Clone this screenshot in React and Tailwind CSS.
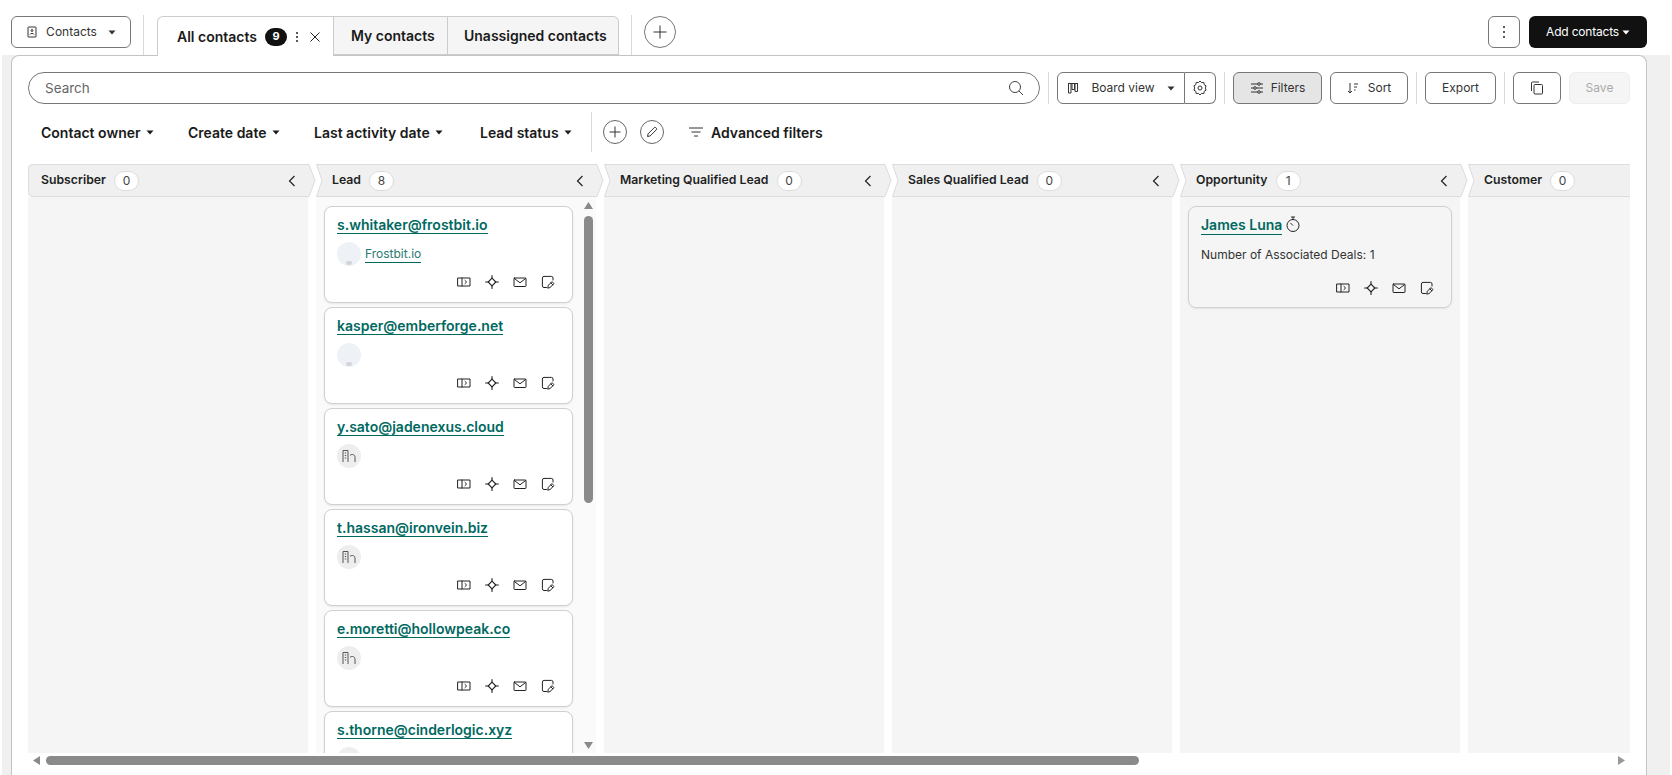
import React from "react";

const Caret = ({ className = "" }) => (
  <svg width="8" height="5" viewBox="0 0 8 5" className={className}><path d="M0.5 0.5h7L4 4.5z" fill="currentColor" /></svg>
);

const Sep = ({ className = "" }) => <div className={"w-px bg-[#d9d9d9] shrink-0 " + className} />;

const base = { fill: "none", stroke: "currentColor", strokeWidth: 1, strokeLinecap: "round", strokeLinejoin: "round" };

const IPreview = () => (
  <svg width="14" height="12" viewBox="0 0 14 12" {...base}><rect x="1" y="2" width="12" height="8" /><path d="M5 2v8M8 4.5 9.6 6 8 7.5" /></svg>
);
const ISpark = () => (
  <svg width="14" height="14" viewBox="0 0 14 14" {...base} strokeWidth="1.1"><path d="M7 3.2 10.8 7 7 10.8 3.2 7z" /><path d="M7 .6v2.6M7 10.8v2.6M.6 7h2.6M10.8 7h2.6" /></svg>
);
const IMail = () => (
  <svg width="14" height="12" viewBox="0 0 14 12" {...base}><rect x="1" y="2" width="12" height="8.5" rx=".6" /><path d="M1.5 2.6 7 6.8l5.5-4.2" /></svg>
);
const INote = () => (
  <svg width="14" height="14" viewBox="0 0 14 14" {...base}><path d="M5.5 12.500H3a1.600 1.600 0 0 1-1.600-1.600V3A1.600 1.600 0 0 1 3 1.400h7.500A1.600 1.600 0 0 1 12 3v2" /><path d="M6.800 12.800l.5-2.500 3.700-3.700 2 2-3.700 3.700zM9.800 7.800l2 2" /></svg>
);
const Building = () => (
  <svg width="14" height="14" viewBox="0 0 14 14" fill="none" stroke="#555" strokeWidth="1"><path d="M1 13V1.500h5V13M2.800 4h1.400M2.800 6.500h1.400M2.800 9h1.400M8 6.200c2.500-1.500 5-.5 5 2V13" /></svg>
);

const Actions = ({ className = "" }) => (
  <div className={"flex justify-end items-center gap-[14px] text-[#222] " + className}>
    <span className="w-[14px] flex justify-center"><IPreview /></span>
    <span className="w-[14px] flex justify-center"><ISpark /></span>
    <span className="w-[14px] flex justify-center"><IMail /></span>
    <span className="w-[14px] flex justify-center"><INote /></span>
  </div>
);

const Email = ({ children }) => (
  <a className="inline-block text-[14px] font-semibold leading-[19px] text-[#00695f] border-b-[1.5px] border-[#00695f]">{children}</a>
);

const Card = ({ email, frost, company, building }) => (
  <div className="shrink-0 w-[249px] h-[97px] bg-white border border-[#d0d0d0] rounded-lg shadow-[0_1px_2px_rgba(0,0,0,0.08)] pl-3 pr-[17px] pt-[8px]">
    <div className="h-[19px] flex"><Email>{email}</Email></div>
    <div className="flex items-center h-[24px] mt-[8px] gap-1">
      {frost && (
        <span className="relative w-6 h-6 rounded-full bg-[#eef2f7] blur-[0.5px] overflow-hidden shrink-0">
          <span className="absolute left-[9px] bottom-[1px] w-[6px] h-[4px] rounded-full bg-[#d2d5d9]" />
        </span>
      )}
      {building && (
        <span className="w-6 h-6 rounded-full bg-[#eeeeee] flex items-center justify-center shrink-0"><Building /></span>
      )}
      {company && <span className="text-[12px] leading-[16px] text-[#2a7a70] border-b border-[#00695f]">{company}</span>}
    </div>
    <Actions className="mt-[9px]" />
  </div>
);

const leads = [
  { email: "s.whitaker@frostbit.io", frost: true, company: "Frostbit.io" },
  { email: "kasper@emberforge.net", frost: true },
  { email: "y.sato@jadenexus.cloud", building: true },
  { email: "t.hassan@ironvein.biz", building: true },
  { email: "e.moretti@hollowpeak.co", building: true },
  { email: "s.thorne@cinderlogic.xyz", building: true },
];

const Header = ({ name, count, first, last }) => (
  <div className="relative h-[33px] flex items-center">
    <svg width="288" height="33" viewBox="0 0 288 33" className="absolute left-0 top-0">
      {first ? (
        <path d="M.5 4.500a4 4 0 0 1 4-4H281l6 16-6 16H4.500a4 4 0 0 1-4-4z" fill="#f0f0f0" stroke="#dcdcdc" />
      ) : (
        <path d="M.5 .5H281l6 16-6 16H.5l5.500-16z" fill="#f0f0f0" stroke="#dcdcdc" />
      )}
    </svg>
    <div className={"relative flex items-center " + (first ? "pl-[13px]" : "pl-4")}>
      <span className="text-[12.25px] font-semibold text-[#1f1f1f]">{name}</span>
      <span className="ml-2 w-[25px] h-[20px] rounded-full bg-white border border-[#dcdcdc] flex items-center justify-center text-[12px] text-[#444]">{count}</span>
    </div>
    {!last && (
      <svg width="8" height="12" viewBox="0 0 8 12" fill="none" stroke="#222" strokeWidth="1.2" className="absolute left-[260px] top-[11px]"><path d="M6.500 1 1.500 6l5 5" /></svg>
    )}
  </div>
);

const Column = ({ name, count, first, last, className = "", children, wide = true }) => (
  <div className={"shrink-0 flex flex-col " + (wide ? "w-[280px]" : "w-[162px]") + " " + className}>
    <Header name={name} count={count} first={first} last={last} />
    {children}
  </div>
);

const Btn = ({ className = "", children }) => (
  <button className={"h-8 rounded-md border border-[#777] flex items-center justify-center text-[12px] text-[#333] shrink-0 " + className}>{children}</button>
);

const Filter = ({ label, className }) => (
  <div className={"flex items-center gap-[5px] text-[14px] font-semibold text-[#1a1a1a] " + className}>
    {label}
    <Caret />
  </div>
);

export default function App() {
  return (
    <div className="w-[1672px] h-[775px] bg-white overflow-hidden flex flex-col [font-family:Inter,sans-serif]">
      <div className="h-[55px] relative z-10 flex items-start pl-[11px] pr-[25px] shrink-0">
        <Btn className="w-[120px] mt-4 gap-[8px]">
          <svg width="12" height="12" viewBox="0 0 12 12" fill="none" stroke="#333"><rect x="2" y="1" width="8" height="10" rx=".5" /><circle cx="6" cy="4.500" r="1" /><path d="M4 8.500c.5-1.500 3.500-1.500 4 0" /></svg>
          <span>Contacts</span>
          <Caret className="ml-[3px]" />
        </Btn>
        <Sep className="h-10 mt-[15px] ml-3" />
        <div className="flex mt-4 ml-[13px] h-10">
          <div className="w-[177px] h-10 bg-white border border-[#ccc] border-b-0 rounded-tl-md flex items-center pl-[19px] text-[14px] font-semibold text-[#1a1a1a]">
            <span>All contacts</span>
            <span className="ml-2 w-[22px] h-[18px] rounded-full bg-[#111] text-white text-[11px] font-bold flex items-center justify-center">9</span>
            <svg width="4" height="12" viewBox="0 0 4 12" className="ml-2" fill="#222"><circle cx="2" cy="2" r="1" /><circle cx="2" cy="6" r="1" /><circle cx="2" cy="10" r="1" /></svg>
            <svg width="12" height="12" viewBox="0 0 12 12" className="ml-[10px]" fill="none" stroke="#222"><path d="M1.500 1.500l9 9M10.500 1.500l-9 9" /></svg>
          </div>
          <div className="w-[114px] h-[39px] bg-[#f5f5f5] border border-l-0 border-[#ccc] flex items-center pl-[17px] text-[14px] font-semibold text-[#1a1a1a]">My contacts</div>
          <div className="w-[171px] h-[39px] bg-[#f5f5f5] border border-l-0 border-[#ccc] rounded-tr-md flex items-center pl-[16px] text-[14px] font-semibold text-[#1a1a1a]">Unassigned contacts</div>
        </div>
        <Sep className="h-10 mt-[15px] ml-3" />
        <button className="w-8 h-8 mt-4 ml-3 rounded-full border border-[#777] flex items-center justify-center">
          <svg width="14" height="14" viewBox="0 0 14 14" stroke="#333"><path d="M7 .5v13M.5 7h13" /></svg>
        </button>
        <div className="ml-auto flex gap-[9px] pt-4">
          <Btn className="w-[32px]">
            <svg width="4" height="14" viewBox="0 0 4 14" fill="#222"><circle cx="2" cy="2" r="1" /><circle cx="2" cy="7" r="1" /><circle cx="2" cy="12" r="1" /></svg>
          </Btn>
          <button className="w-[118px] h-8 rounded-md bg-[#111] text-white text-[12px] tracking-[-0.2px] flex items-center justify-center gap-[3px]">Add contacts <Caret /></button>
        </div>
      </div>

      <div className="flex-1 min-h-0 mx-[2px] bg-[#f0f0f0] pl-[9px] pr-[23px] flex">
        <div className="flex-1 min-w-0 bg-white border border-b-0 border-[#c4c4c4] rounded-t-lg pl-4 pr-[16px] pt-4 flex flex-col">
          <div className="flex items-center gap-2 h-8 shrink-0">
            <div className="w-[1012px] h-8 rounded-full border border-[#777] flex items-center justify-between pl-4 pr-[15px] shrink-0">
              <span className="text-[13.500px] text-[#666]">Search</span>
              <svg width="16" height="16" viewBox="0 0 16 16" fill="none" stroke="#444"><circle cx="7" cy="7" r="5.500" /><path d="M11 11l4 4" /></svg>
            </div>
            <Sep className="h-8" />
            <div className="flex h-8 shrink-0">
              <button className="w-[128px] h-8 border border-[#777] rounded-l-md flex items-center justify-center gap-[12px] text-[12px] text-[#333]">
                <svg width="12" height="12" viewBox="0 0 12 12" fill="none" stroke="#333"><path d="M1 1.500h10M1.500 1.500v9.500h2.500v-9.500M5 1.500v6h2.500v-6M8 1.500v8h2.500v-8" /></svg>
                <span>Board view</span>
                <Caret />
              </button>
              <button className="w-[31px] h-8 border border-l-0 border-[#777] rounded-r-md flex items-center justify-center">
                <svg width="16" height="16" viewBox="0 0 16 16" fill="none" stroke="#333"><path d="M8 1l1.500 1.600 2.300-.2.400 2.300 2 1.200-1 2.100 1 2.100-2 1.200-.4 2.300-2.300-.2L8 15l-1.500-1.600-2.300.2-.4-2.300-2-1.200 1-2.100-1-2.100 2-1.200.4-2.300 2.300.2z" /><circle cx="8" cy="8" r="2" /></svg>
              </button>
            </div>
            <Sep className="h-8" />
            <Btn className="w-[89px] bg-[#e5e5e5] gap-[7px]">
              <svg width="14" height="14" viewBox="0 0 14 14" fill="none" stroke="#333"><path d="M1 3h12M1 7h12M1 11h12" /><circle cx="9" cy="3" r="1.300" fill="#e5e5e5" /><circle cx="5" cy="7" r="1.300" fill="#e5e5e5" /><circle cx="9" cy="11" r="1.300" fill="#e5e5e5" /></svg>
              <span>Filters</span>
            </Btn>
            <Btn className="w-[78px] gap-[9px]">
              <svg width="12" height="12" viewBox="0 0 12 12" fill="none" stroke="#333"><path d="M3 1v10M1 9l2 2 2-2M7 2h4M7 5h3M7 8h1.500" /></svg>
              <span>Sort</span>
            </Btn>
            <Sep className="h-8" />
            <Btn className="w-[71px]">Export</Btn>
            <Sep className="h-8" />
            <Btn className="w-[48px]">
              <svg width="14" height="14" viewBox="0 0 14 14" fill="none" stroke="#333"><path d="M1.500 10V2a1 1 0 0 1 1-1H9" /><rect x="4" y="3.500" width="8.500" height="9.500" rx="1" /></svg>
            </Btn>
            <button className="w-[61px] h-8 rounded-md bg-[#f5f5f5] border border-[#eee] text-[12px] text-[#aaa] shrink-0">Save</button>
          </div>

          <div className="flex items-center h-10 mt-2 pl-[13px] shrink-0">
            <Filter label="Contact owner" className="w-[147px]" />
            <Filter label="Create date" className="w-[126px]" />
            <Filter label="Last activity date" className="w-[166px]" />
            <Filter label="Lead status" className="w-[111px]" />
            <Sep className="h-10" />
            <button className="ml-[11px] w-6 h-6 rounded-full border border-[#666] flex items-center justify-center">
              <svg width="12" height="12" viewBox="0 0 12 12" stroke="#333"><path d="M6 .5v11M.5 6h11" /></svg>
            </button>
            <button className="ml-[13px] w-6 h-6 rounded-full border border-[#666] flex items-center justify-center">
              <svg width="12" height="12" viewBox="0 0 12 12" fill="none" stroke="#333"><path d="M1.500 10.500l.6-2.700L8.300 1.600a1 1 0 0 1 1.400 0l.7.7a1 1 0 0 1 0 1.400L4.200 9.900z" /></svg>
            </button>
            <svg width="14" height="10" viewBox="0 0 14 10" stroke="#333" className="ml-[25px]"><path d="M0 1h14M2.500 5h9M5 9h4" /></svg>
            <span className="ml-2 text-[14px] font-semibold text-[#1a1a1a]">Advanced filters</span>
          </div>

          <div className="mt-3 flex-1 min-h-0 flex gap-2 overflow-hidden">
            <Column name="Subscriber" count="0" first><div className="flex-1 bg-[#f5f5f5]" /></Column>
            <Column name="Lead" count="8" className="relative">
              <div className="flex-1 min-h-0 bg-[#fafafa] pl-2 pt-[9px] flex flex-col gap-1 overflow-hidden relative">
                {leads.map((l) => <Card key={l.email} {...l} />)}
                <div className="absolute left-[268px] top-[19px] w-[9px] h-[287px] rounded-full bg-[#8a8a8a]" />
                <svg width="9" height="7" viewBox="0 0 9 7" fill="#8a8a8a" className="absolute left-[268px] top-[5px]"><path d="M4.500 0 9 7H0z" /></svg>
                <svg width="9" height="7" viewBox="0 0 9 7" fill="#8a8a8a" className="absolute left-[268px] bottom-[4px]"><path d="M0 0h9L4.500 7z" /></svg>
              </div>
            </Column>
            <Column name="Marketing Qualified Lead" count="0"><div className="flex-1 bg-[#f5f5f5]" /></Column>
            <Column name="Sales Qualified Lead" count="0"><div className="flex-1 bg-[#f5f5f5]" /></Column>
            <Column name="Opportunity" count="1">
              <div className="flex-1 bg-[#f5f5f5] pt-[9px] px-2">
                <div className="h-[102px] border border-[#d0d0d0] rounded-lg shadow-[0_1px_2px_rgba(0,0,0,0.08)] pl-3 pr-[17px] pt-2">
                  <div className="flex items-start gap-[3px] h-[19px]">
                    <Email>James Luna</Email>
                    <svg width="16" height="17" viewBox="0 0 16 17" fill="none" stroke="#222" className="mt-[1px]"><circle cx="8" cy="9.500" r="6" /><path d="M6 1h4M8 1v2.500M8 9.500 5.500 7" /></svg>
                  </div>
                  <div className="mt-3 h-[18px] text-[12px] leading-[18px] text-[#333]">Number of Associated Deals: 1</div>
                  <Actions className="mt-[17px]" />
                </div>
              </div>
            </Column>
            <Column name="Customer" count="0" last wide={false}><div className="flex-1 bg-[#f5f5f5]" /></Column>
          </div>

          <div className="h-[22px] shrink-0 flex items-start pt-[3px] pl-[5px] pr-[5px]">
            <svg width="7" height="9" viewBox="0 0 7 9" fill="#8a8a8a"><path d="M7 0v9L0 4.500z" /></svg>
            <div className="ml-[6px] w-[1093px] h-[9px] rounded-full bg-[#8a8a8a]" />
            <svg width="7" height="9" viewBox="0 0 7 9" fill="#999" className="ml-auto"><path d="M0 0v9l7-4.500z" /></svg>
          </div>
        </div>
      </div>
    </div>
  );
}
